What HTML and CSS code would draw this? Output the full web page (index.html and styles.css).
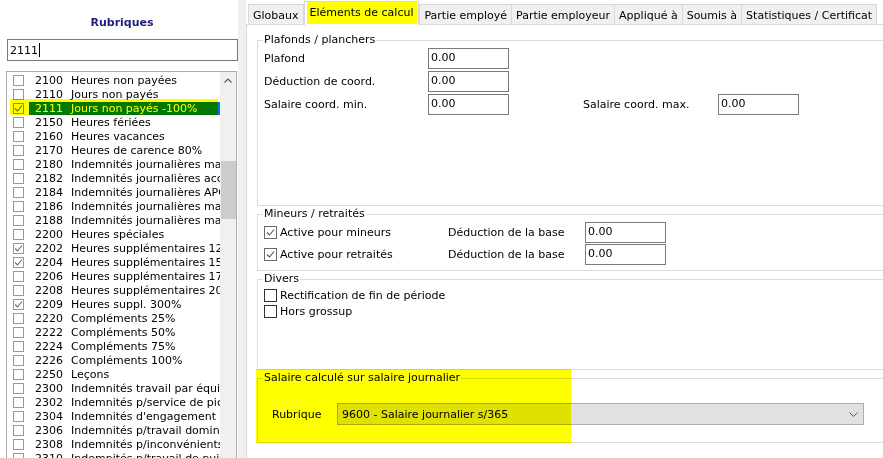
FILE: index.html
```html
<!DOCTYPE html>
<html lang="fr">
<head>
    <meta charset="UTF-8">
    <title>Rubriques</title>
    <link rel="stylesheet" href="styles.css">
</head>
<body>
    <div class="sidebar">
        <h1>Rubriques</h1>
        <div class="search">2111<span class="caret"></span></div>
        <div class="listbox">
            <div class="items">
                <div class="item"><span class="box"></span><span class="text"><span class="code">2100</span>Heures non payées</span></div>
                <div class="item"><span class="box"></span><span class="text"><span class="code">2110</span>Jours non payés</span></div>
                <div class="item selected"><span class="box checked"><svg viewBox="0 0 9 9" width="9" height="9"><path d="M1 4.5 L3.5 7 L8 1.5" fill="none" stroke="#666" stroke-width="1.1"/></svg></span><span class="text"><span class="code">2111</span>Jours non payés -100%</span></div>
                <div class="item"><span class="box"></span><span class="text"><span class="code">2150</span>Heures fériées</span></div>
                <div class="item"><span class="box"></span><span class="text"><span class="code">2160</span>Heures vacances</span></div>
                <div class="item"><span class="box"></span><span class="text"><span class="code">2170</span>Heures de carence 80%</span></div>
                <div class="item"><span class="box"></span><span class="text"><span class="code">2180</span>Indemnités journalières mal</span></div>
                <div class="item"><span class="box"></span><span class="text"><span class="code">2182</span>Indemnités journalières acc</span></div>
                <div class="item"><span class="box"></span><span class="text"><span class="code">2184</span>Indemnités journalières APG</span></div>
                <div class="item"><span class="box"></span><span class="text"><span class="code">2186</span>Indemnités journalières mat</span></div>
                <div class="item"><span class="box"></span><span class="text"><span class="code">2188</span>Indemnités journalières mat</span></div>
                <div class="item"><span class="box"></span><span class="text"><span class="code">2200</span>Heures spéciales</span></div>
                <div class="item"><span class="box checked"><svg viewBox="0 0 9 9" width="9" height="9"><path d="M1 4.5 L3.5 7 L8 1.5" fill="none" stroke="#666" stroke-width="1.1"/></svg></span><span class="text"><span class="code">2202</span>Heures supplémentaires 12</span></div>
                <div class="item"><span class="box checked"><svg viewBox="0 0 9 9" width="9" height="9"><path d="M1 4.5 L3.5 7 L8 1.5" fill="none" stroke="#666" stroke-width="1.1"/></svg></span><span class="text"><span class="code">2204</span>Heures supplémentaires 15</span></div>
                <div class="item"><span class="box"></span><span class="text"><span class="code">2206</span>Heures supplémentaires 17</span></div>
                <div class="item"><span class="box"></span><span class="text"><span class="code">2208</span>Heures supplémentaires 20</span></div>
                <div class="item"><span class="box checked"><svg viewBox="0 0 9 9" width="9" height="9"><path d="M1 4.5 L3.5 7 L8 1.5" fill="none" stroke="#666" stroke-width="1.1"/></svg></span><span class="text"><span class="code">2209</span>Heures suppl. 300%</span></div>
                <div class="item"><span class="box"></span><span class="text"><span class="code">2220</span>Compléments 25%</span></div>
                <div class="item"><span class="box"></span><span class="text"><span class="code">2222</span>Compléments 50%</span></div>
                <div class="item"><span class="box"></span><span class="text"><span class="code">2224</span>Compléments 75%</span></div>
                <div class="item"><span class="box"></span><span class="text"><span class="code">2226</span>Compléments 100%</span></div>
                <div class="item"><span class="box"></span><span class="text"><span class="code">2250</span>Leçons</span></div>
                <div class="item"><span class="box"></span><span class="text"><span class="code">2300</span>Indemnités travail par équip</span></div>
                <div class="item"><span class="box"></span><span class="text"><span class="code">2302</span>Indemnités p/service de pic</span></div>
                <div class="item"><span class="box"></span><span class="text"><span class="code">2304</span>Indemnités d'engagement</span></div>
                <div class="item"><span class="box"></span><span class="text"><span class="code">2306</span>Indemnités p/travail dominic</span></div>
                <div class="item"><span class="box"></span><span class="text"><span class="code">2308</span>Indemnités p/inconvénients</span></div>
                <div class="item"><span class="box"></span><span class="text"><span class="code">2310</span>Indemnités p/travail de nuit</span></div>
            </div>
            <div class="scrollbar">
                <div class="scroll-up"><svg viewBox="0 0 8 5" width="8" height="5"><path d="M0.5 4.5 L4 1 L7.5 4.5" fill="none" stroke="#606060" stroke-width="1.2"/></svg></div>
                <div class="thumb"></div>
            </div>
        </div>
    </div>

    <div class="splitter"></div>

    <div class="main">
        <div class="tabs">
            <div class="tab">Globaux</div>
            <div class="tab active">Eléments de calcul</div>
            <div class="tab">Partie employé</div>
            <div class="tab">Partie employeur</div>
            <div class="tab">Appliqué à</div>
            <div class="tab">Soumis à</div>
            <div class="tab">Statistiques / Certificat</div>
        </div>
        <div class="page">
            <fieldset class="group g1">
                <legend>Plafonds / planchers</legend>
                <div class="field"><label>Plafond</label><div class="input">0.00</div></div>
                <div class="field"><label>Déduction de coord.</label><div class="input">0.00</div></div>
                <div class="field">
                    <label>Salaire coord. min.</label><div class="input">0.00</div>
                    <label class="second">Salaire coord. max.</label><div class="input">0.00</div>
                </div>
            </fieldset>

            <fieldset class="group g2">
                <legend>Mineurs / retraités</legend>
                <div class="field">
                    <div class="check-label"><span class="check on"><svg viewBox="0 0 11 11" width="11" height="11"><path d="M2 5.5 L4.5 8 L9 2.5" fill="none" stroke="#555" stroke-width="1.1"/></svg></span>Active pour mineurs</div>
                    <label class="base">Déduction de la base</label><div class="input">0.00</div>
                </div>
                <div class="field">
                    <div class="check-label"><span class="check on"><svg viewBox="0 0 11 11" width="11" height="11"><path d="M2 5.5 L4.5 8 L9 2.5" fill="none" stroke="#555" stroke-width="1.1"/></svg></span>Active pour retraités</div>
                    <label class="base">Déduction de la base</label><div class="input">0.00</div>
                </div>
            </fieldset>

            <fieldset class="group g3">
                <legend>Divers</legend>
                <div class="option"><span class="check"></span>Rectification de fin de période</div>
                <div class="option"><span class="check"></span>Hors grossup</div>
            </fieldset>

            <fieldset class="group g4">
                <legend>Salaire calculé sur salaire journalier</legend>
                <div class="combo-row">
                    <label>Rubrique</label>
                    <div class="combo">
                        <span>9600 - Salaire journalier s/365</span>
                        <svg viewBox="0 0 9 5" width="9" height="5"><path d="M0.5 0.5 L4.5 4.5 L8.5 0.5" fill="none" stroke="#606060" stroke-width="1"/></svg>
                    </div>
                </div>
            </fieldset>
        </div>
    </div>

    <!-- yellow highlighter marks laid over the screen -->
    <div class="mark mark-row"></div>
    <div class="mark mark-tab"></div>
    <div class="mark mark-group"></div>
</body>
</html>
```

FILE: styles.css
```css
* {
    box-sizing: border-box;
}

body {
    margin: 0;
    width: 883px;
    height: 458px;
    overflow: hidden;
    position: relative;
    display: flex;
    background: #fff;
    color: #000;
    font-family: "DejaVu Sans", sans-serif;
    font-size: 11px;
}

/* left panel */

.sidebar {
    width: 238px;
    flex: none;
    padding-top: 16px;
}

.sidebar h1 {
    margin: 0;
    padding-left: 6px;
    font-size: 11px;
    line-height: 14px;
    text-align: center;
    color: #1f1f7a;
}

.search {
    display: flex;
    align-items: center;
    margin: 9px 0 0 7px;
    width: 231px;
    height: 22px;
    padding: 0 2px;
    border: 1px solid #7a7a7a;
}

.caret {
    width: 1px;
    height: 14px;
    margin-left: 1px;
    background: #000;
}

.listbox {
    display: flex;
    margin: 10px 0 0 6px;
    width: 231px;
    height: 400px;
    border: 1px solid #acacac;
}

.items {
    width: 213px;
    flex: none;
    padding-top: 1px;
    overflow: hidden;
}

.item {
    display: flex;
    align-items: center;
    height: 14px;
    white-space: nowrap;
}

.box {
    display: flex;
    align-items: center;
    justify-content: center;
    width: 11px;
    height: 11px;
    margin-left: 6px;
    flex: none;
    border: 1px solid #999;
    background: #fff;
}

.item .text {
    flex: 1;
    height: 13px;
    line-height: 13px;
    margin-left: 5px;
    padding-left: 6px;
    overflow: hidden;
}

.code {
    display: inline-block;
    width: 36px;
}

.item.selected .text {
    background: #0078d7;
    color: #fff;
}

.scrollbar {
    width: 16px;
    flex: none;
    display: flex;
    flex-direction: column;
    background: #f0f0f0;
}

.scroll-up {
    height: 17px;
    display: flex;
    align-items: center;
    justify-content: center;
}

.thumb {
    align-self: flex-end;
    width: 15px;
    height: 58px;
    margin-top: 72px;
    background: #cdcdcd;
}

.splitter {
    width: 8px;
    flex: none;
    background: #f0f0f0;
}

/* tabs */

.main {
    width: 637px;
    flex: none;
}

.tabs {
    display: flex;
    align-items: flex-end;
    height: 24px;
    padding-left: 2px;
}

.tab {
    height: 20px;
    line-height: 21px;
    padding: 0 4px;
    border: 1px solid #d9d9d9;
    border-bottom: 0;
    margin-right: -1px;
    background: #f0f0f0;
    white-space: nowrap;
}

.tab.active {
    position: relative;
    z-index: 1;
    height: 24px;
    line-height: 22px;
    padding: 0 5px;
    margin: 0 0 -1px 1px;
    background: #fff;
}

.page {
    height: 434px;
    padding: 9px 0 0 10px;
    border-top: 1px solid #d9d9d9;
    border-left: 1px solid #d9d9d9;
}

/* group boxes, open on the right where the window is cut */

.group {
    width: 626px;
    margin: 0;
    padding: 2px 6px 0;
    border: 1px solid #dcdcdc;
    border-right: 0;
}

.group legend {
    padding: 0 1px;
    margin-left: -1px;
    line-height: 12px;
}

.g1 {
    height: 172px;
}

.g2 {
    height: 63px;
    margin-top: 2px;
}

.g3 {
    height: 97px;
    margin-top: 2px;
}

.g4 {
    height: 71px;
    margin-top: 2px;
}

.field {
    display: flex;
    align-items: center;
    height: 21px;
    margin-bottom: 2px;
}

.g2 .field {
    margin-bottom: 1px;
}

.field label {
    width: 164px;
}

.field label.second {
    width: 135px;
    margin-left: 74px;
}

.field label.base {
    width: 137px;
}

.input {
    width: 81px;
    height: 21px;
    padding: 0 2px;
    border: 1px solid #7a7a7a;
    line-height: 18px;
    background: #fff;
}

.check-label {
    display: flex;
    align-items: center;
    width: 184px;
}

.check {
    display: flex;
    align-items: center;
    justify-content: center;
    width: 13px;
    height: 13px;
    margin-right: 3px;
    flex: none;
    border: 1px solid #333;
    background: #fff;
}

.check.on {
    border-color: #6a6a6a;
}

.option {
    display: flex;
    align-items: center;
    height: 16px;
}

.combo-row {
    display: flex;
    align-items: center;
    margin-top: 17px;
}

.combo-row label {
    width: 65px;
    margin-left: 8px;
}

.combo {
    display: flex;
    align-items: center;
    justify-content: space-between;
    width: 527px;
    height: 22px;
    padding: 0 5px 0 4px;
    border: 1px solid #adadad;
    background: #e1e1e1;
}

/* highlighter */

.mark {
    position: absolute;
    z-index: 2;
    background: #ffff00;
    mix-blend-mode: multiply;
    pointer-events: none;
}

.mark-row {
    left: 10px;
    top: 99px;
    width: 208px;
    height: 16px;
}

.mark-tab {
    left: 307px;
    top: 2px;
    width: 110px;
    height: 22px;
}

.mark-group {
    left: 256px;
    top: 369px;
    width: 315px;
    height: 74px;
}
```
